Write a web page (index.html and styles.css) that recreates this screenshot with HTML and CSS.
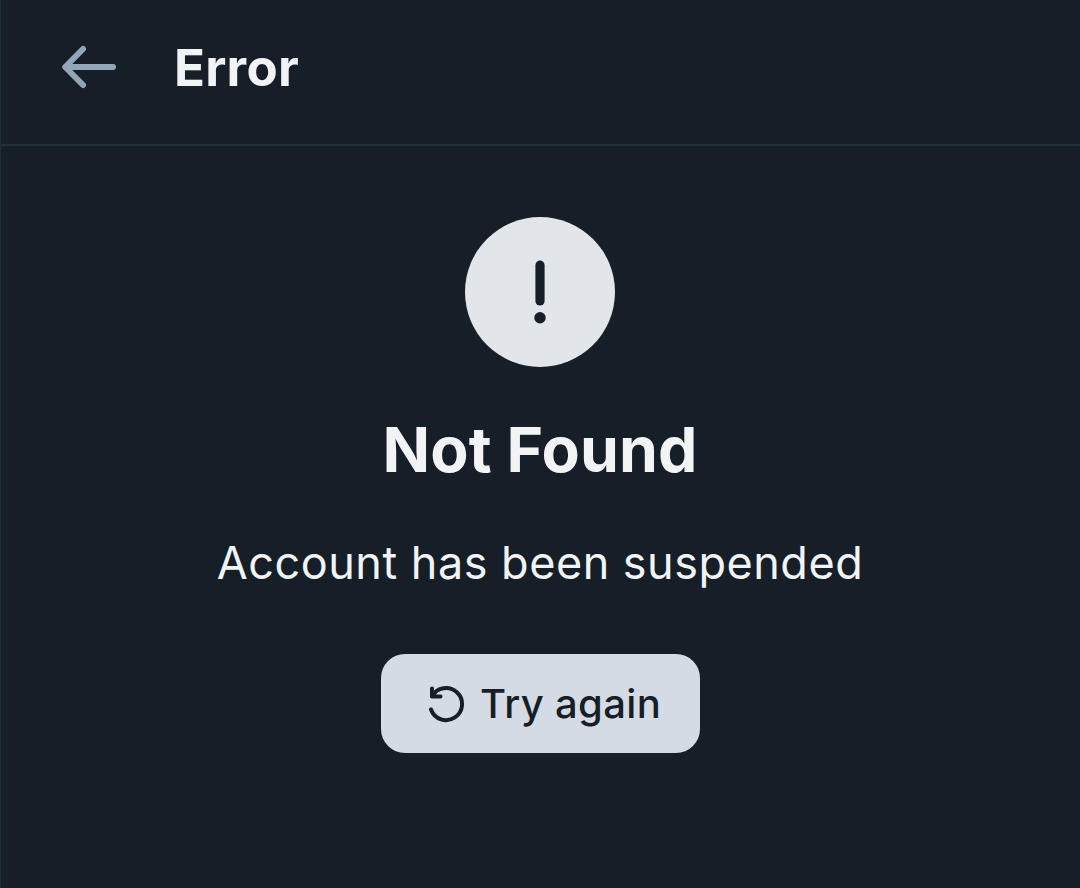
FILE: index.html
```html
<!DOCTYPE html>
<html lang="en">
<head>
<meta charset="UTF-8">
<meta name="viewport" content="width=device-width, initial-scale=1.0">
<title>Error</title>
<link rel="stylesheet" href="styles.css">
</head>
<body>
<div class="screen">
<header class="header">
<button class="back" aria-label="Back">
<svg width="56" height="44" viewBox="0 0 56 44" fill="none" stroke="currentColor" stroke-width="6" stroke-linecap="round" stroke-linejoin="round"><path d="M22 4 4.200 22 22 40M5 22h47"/></svg>
</button>
<h1 class="title">Error</h1>
</header>
<main class="content">
<div class="badge">
<svg width="12" height="64" viewBox="0 0 12 64"><path d="M6 5.200v35.800" stroke="currentColor" stroke-width="9.200" stroke-linecap="round"/><circle cx="6" cy="57.700" r="5.700" fill="currentColor"/></svg>
</div>
<h2 class="heading">Not Found</h2>
<p class="message">Account has been suspended</p>
<button class="retry">
<svg width="38" height="39" viewBox="0 0 38 39" fill="none" stroke="currentColor" stroke-width="4" stroke-linecap="round" stroke-linejoin="round"><path d="M5 4.500v8h8.500M5 12.500A16 16 0 1 1 4 25.500"/></svg>
<span>Try again</span>
</button>
</main>
</div>
</body>
</html>
```
FILE: styles.css
```css
* {
    box-sizing: border-box;
}

body {
    margin: 0;
    background: #161e27;
    color: #f1f3f5;
    font-family: Inter, sans-serif;
}

h1, h2, p {
    margin: 0;
}

button {
    border: 0;
    padding: 0;
    font: inherit;
}

.screen {
    height: 100vh;
    border-left: 1px solid #1f2b38;
}

.header {
    display: flex;
    align-items: center;
    gap: 57px;
    height: 146px;
    padding: 2px 61px 12px 60px;
    border-bottom: 2px solid #222e3e;
}

.back {
    display: flex;
    background: none;
    color: #93a5b9;
}

.title {
    padding-top: 2px;
    font-size: 51px;
    line-height: 66px;
    font-weight: 700;
    letter-spacing: 0.25px;
}

.content {
    display: flex;
    flex-direction: column;
    align-items: center;
    padding: 71px 1px 0 0;
}

.badge {
    display: flex;
    align-items: center;
    justify-content: center;
    width: 150px;
    height: 150px;
    border-radius: 50%;
    background: #e2e5ea;
    color: #161e27;
}

.heading {
    margin-top: 42px;
    font-size: 62.5px;
    line-height: 80px;
    font-weight: 700;
    letter-spacing: 0.1px;
}

.message {
    margin-top: 44px;
    font-size: 45px;
    line-height: 60px;
    letter-spacing: 0.5px;
}

.retry {
    display: flex;
    align-items: center;
    gap: 15px;
    width: 319px;
    height: 99px;
    margin: 61px 0 0 1px;
    padding: 0 0 0 46px;
    border-radius: 24px;
    background: #d5dbe4;
    color: #161e27;
    font-size: 40px;
    font-weight: 500;
    letter-spacing: 0.35px;
}
```
